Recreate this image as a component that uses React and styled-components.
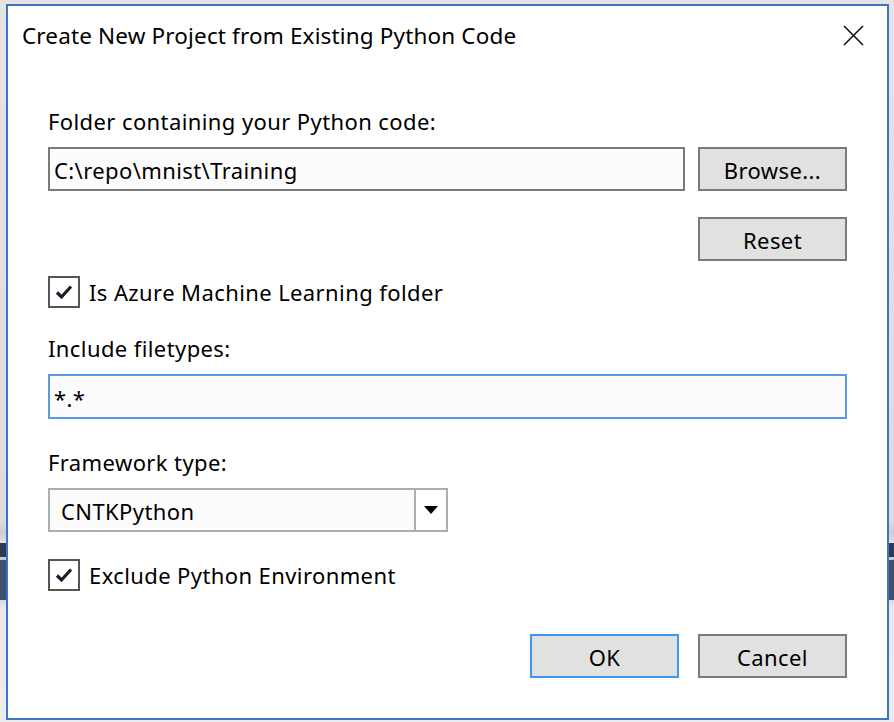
import React, { useState } from 'react';
import styled, { createGlobalStyle } from 'styled-components';

const GlobalStyle = createGlobalStyle`
  html, body {
    margin: 0;
    padding: 0;
  }
  body {
    width: 894px;
    height: 722px;
    overflow: hidden;
    font-family: "Noto Sans", "Open Sans", sans-serif;
    background: linear-gradient(
      to bottom,
      #e4e4e4 0px,
      #dcdcdc 520px,
      #c9ccd2 533px,
      #e2e4e8 543px,
      #2b3a58 543px,
      #2b3a58 557px,
      #c5cad3 557px,
      #c5cad3 560px,
      #3f5070 560px,
      #3f5070 600px,
      #d5d8de 600px,
      #e8e8e8 607px,
      #ececec 722px
    );
  }
`;

const Window = styled.div`
  box-sizing: border-box;
  margin: 4px 0 0 6px;
  width: 883px;
  height: 716px;
  border: 2px solid #3f73c3;
  background: #ffffff;
  display: flex;
  flex-direction: column;
`;

const TitleBar = styled.div`
  height: 58px;
  display: flex;
  align-items: center;
  justify-content: space-between;
  padding: 0 22px 0 14px;
`;

const Title = styled.div`
  font-size: 22.5px;
  color: #000;
  letter-spacing: 0.15px;
`;

const CloseButton = styled.button`
  width: 24px;
  height: 24px;
  border: none;
  background: transparent;
  padding: 0;
  display: flex;
  align-items: center;
  justify-content: center;
  cursor: pointer;
`;

const Body = styled.div`
  display: flex;
  flex-direction: column;
  padding: 0 40px;
  font-size: 22px;
  letter-spacing: 0.4px;
`;

const Label = styled.label`
  display: block;
  line-height: 28px;
  color: #000;
  margin-top: ${p => p.$mt || 0}px;
`;

const Row = styled.div`
  display: flex;
  align-items: center;
  gap: ${p => p.$gap || 0}px;
  justify-content: ${p => p.$justify || 'flex-start'};
  margin-top: ${p => p.$mt || 0}px;
`;

const TextInput = styled.input`
  box-sizing: border-box;
  height: ${p => p.$h || 44}px;
  flex: 1;
  border: 2px solid ${p => (p.$focused ? '#5a9ae0' : '#7a7a7a')};
  background: #fcfcfc;
  font-family: inherit;
  font-size: 22px;
  letter-spacing: 0.4px;
  color: #000;
  padding: 2px 4px 0;
  outline: none;
`;

const Button = styled.button`
  box-sizing: border-box;
  width: 149px;
  height: 44px;
  border: 2px solid ${p => (p.$primary ? '#3a98f0' : '#7a7a7a')};
  background: #e1e1e1;
  font-family: inherit;
  font-size: 22px;
  letter-spacing: 0.4px;
  color: #000;
  padding: 2px 0 0;
  cursor: pointer;
`;

const CheckRow = styled.label`
  display: flex;
  align-items: center;
  gap: 9px;
  margin-top: ${p => p.$mt || 0}px;
  line-height: 32px;
  color: #000;
  cursor: pointer;
`;

const Box = styled.span`
  box-sizing: border-box;
  width: 32px;
  height: 32px;
  border: 2px solid #555555;
  background: #fff;
  display: flex;
  align-items: center;
  justify-content: center;
`;

const Combo = styled.div`
  box-sizing: border-box;
  width: 400px;
  height: 44px;
  border: 2px solid #adadad;
  display: flex;
  margin-top: ${p => p.$mt || 0}px;
`;

const ComboValue = styled.div`
  flex: 1;
  background: #fbfbfb;
  line-height: 42px;
  padding-left: 11px;
  color: #000;
`;

const ComboArrow = styled.div`
  width: 30px;
  border-left: 2px solid #adadad;
  background: #fff;
  display: flex;
  align-items: center;
  justify-content: center;
`;

const Check = () => (
  <svg width="18" height="16" viewBox="0 0 18 16">
    <path d="M2 8.5 L6.5 13 L16 2.5" fill="none" stroke="#16202e" strokeWidth="3.2" />
  </svg>
);

const CheckBox = ({ checked, onToggle, children, mt }) => (
  <CheckRow $mt={mt} onClick={onToggle}>
    <Box>{checked && <Check />}</Box>
    <span>{children}</span>
  </CheckRow>
);

const App = () => {
  const [folder, setFolder] = useState('C:\\repo\\mnist\\Training');
  const [types, setTypes] = useState('*.*');
  const [isAzure, setIsAzure] = useState(true);
  const [exclude, setExclude] = useState(true);

  return (
    <>
      <GlobalStyle />
      <Window>
        <TitleBar>
          <Title>Create New Project from Existing Python Code</Title>
          <CloseButton aria-label="Close">
            <svg width="21" height="21" viewBox="0 0 21 21">
              <path d="M1 1 L20 20 M20 1 L1 20" stroke="#111" strokeWidth="1.6" />
            </svg>
          </CloseButton>
        </TitleBar>
        <Body>
          <Label $mt={43}>Folder containing your Python code:</Label>
          <Row $mt={12} $gap={13}>
            <TextInput value={folder} onChange={e => setFolder(e.target.value)} />
            <Button>Browse...</Button>
          </Row>
          <Row $mt={26} $justify="flex-end">
            <Button>Reset</Button>
          </Row>
          <CheckBox mt={15} checked={isAzure} onToggle={() => setIsAzure(v => !v)}>
            Is Azure Machine Learning folder
          </CheckBox>
          <Label $mt={26}>Include filetypes:</Label>
          <Row $mt={12}>
            <TextInput $focused $h={45} value={types} onChange={e => setTypes(e.target.value)} />
          </Row>
          <Label $mt={29}>Framework type:</Label>
          <Combo $mt={12}>
            <ComboValue>CNTKPython</ComboValue>
            <ComboArrow>
              <svg width="14" height="8" viewBox="0 0 14 8">
                <path d="M0 0 L14 0 L7 8 Z" fill="#000" />
              </svg>
            </ComboArrow>
          </Combo>
          <CheckBox mt={27} checked={exclude} onToggle={() => setExclude(v => !v)}>
            Exclude Python Environment
          </CheckBox>
          <Row $mt={43} $gap={19} $justify="flex-end">
            <Button $primary>OK</Button>
            <Button>Cancel</Button>
          </Row>
        </Body>
      </Window>
    </>
  );
};

export default App;
